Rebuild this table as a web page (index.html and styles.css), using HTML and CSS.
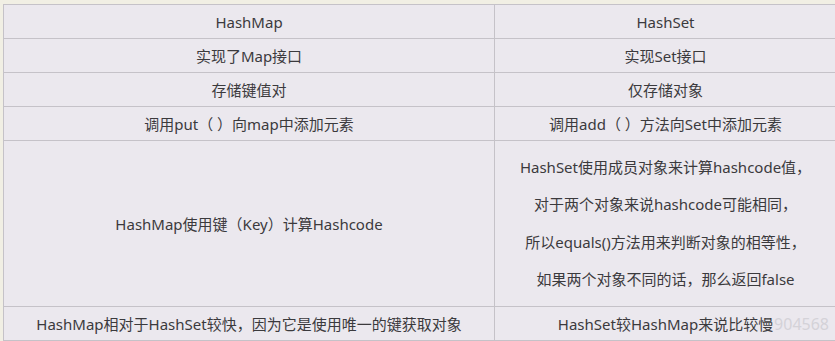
FILE: index.html
```html
<!DOCTYPE html>
<html lang="zh">
<head>
<meta charset="utf-8">
<link rel="stylesheet" href="styles.css">
</head>
<body>
<div class="wrap">
<table class="cmp">
  <tr class="row"><td class="c-left">HashMap</td><td class="c-right">HashSet</td></tr>
  <tr class="row"><td class="c-left">实现了Map接口</td><td class="c-right">实现Set接口</td></tr>
  <tr class="row"><td class="c-left">存储键值对</td><td class="c-right">仅存储对象</td></tr>
  <tr class="row"><td class="c-left">调用put（ ）向map中添加元素</td><td class="c-right">调用add（ ）方法向Set中添加元素</td></tr>
  <tr class="row-tall"><td class="c-left">HashMap使用键（Key）计算Hashcode</td><td class="c-right multi">HashSet使用成员对象来计算hashcode值，<br>对于两个对象来说hashcode可能相同，<br>所以equals()方法用来判断对象的相等性，<br>如果两个对象不同的话，那么返回false</td></tr>
  <tr class="row"><td class="c-left">HashMap相对于HashSet较快，因为它是使用唯一的键获取对象</td><td class="c-right last">HashSet较HashMap来说比较慢<span class="watermark">904568</span></td></tr>
</table>
</div>
</body>
</html>
```
FILE: styles.css
```css
html, body {
  margin: 0;
  padding: 0;
  background: #f1efe4;
  overflow: hidden;
}
.wrap {
  padding: 4px 0 0 3px;
}
.cmp {
  border-collapse: collapse;
  width: 834px;
  table-layout: fixed;
  font-family: "Noto Sans", "Noto Sans CJK SC", sans-serif;
  font-size: 15px;
  color: #3b3a3d;
  background: #ebe8ee;
}
.cmp td {
  border: 1px solid #c5c2c8;
  text-align: center;
  padding: 0;
  vertical-align: middle;
}
.c-left {
  width: 490px;
}
.row td {
  height: 33px;
}
.row-tall td {
  height: 165px;
}
.multi {
  line-height: 37.5px;
}
.last {
  position: relative;
}
.watermark {
  position: absolute;
  right: 7px;
  top: 6px;
  color: #d4d2d8;
  font-family: "Noto Sans", sans-serif;
  font-size: 16px;
}
```
